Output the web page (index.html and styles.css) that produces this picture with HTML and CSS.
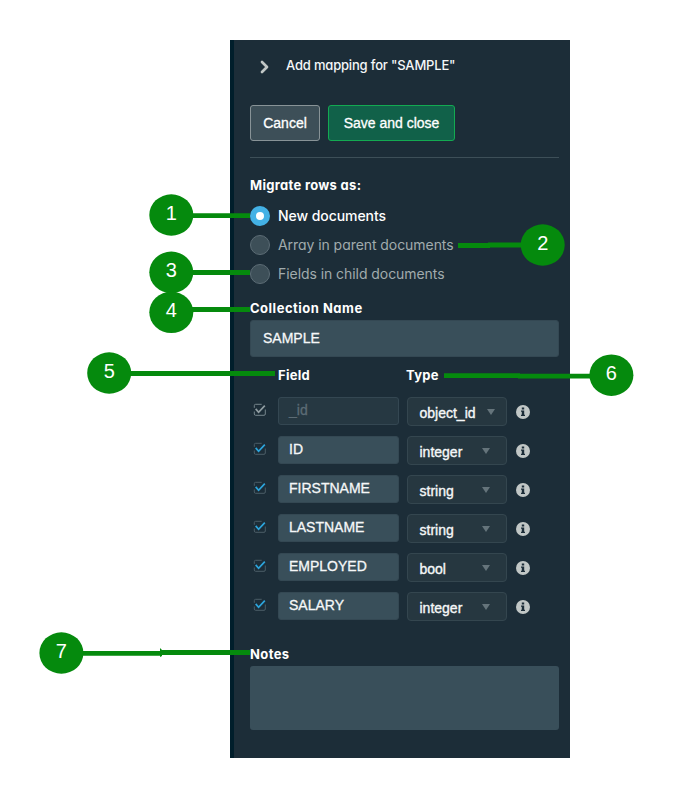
FILE: index.html
```
<!DOCTYPE html>
<html lang="en">
<head>
<meta charset="utf-8">
<title>Add mapping</title>
<link rel="stylesheet" href="styles.css">
</head>
<body>
<svg class="defs" width="0" height="0" aria-hidden="true">
  <symbol id="check" viewBox="0 0 14 14">
    <path class="box" d="M8.7 1.3H2.6Q1.3 1.3 1.3 2.6V4.8M1.3 8.5V11Q1.3 12.3 2.6 12.3H11Q12.3 12.3 12.3 11V6.5"/>
    <path class="tick" d="M2.7 5.9L5.6 9.3L11.8 2.7"/>
  </symbol>
  <symbol id="info" viewBox="0 0 14 14">
    <circle cx="7" cy="7" r="7" fill="#c1c7c6"/>
    <path d="M5.8 2.4h2.4v2H5.8zM5 5.4h3.2v4.3H9v1.4H5V9.7h.8V6.8H5z" fill="#1c2d38"/>
  </symbol>
</svg>
<main class="panel">
  <header class="head">
    <svg class="chevron" width="10" height="14" viewBox="0 0 10 14"><path d="M2 2L7 7L2 12"/></svg>
    <h1 class="title">Add mapping for "SAMPLE"</h1>
  </header>
  <div class="actions">
    <button class="btn">Cancel</button>
    <button class="btn save">Save and close</button>
  </div>
  <h2 class="label migrate">Migrate rows as:</h2>
  <div class="radios">
    <div class="radio on"><i></i><span>New documents</span></div>
    <div class="radio"><i></i><span>Array in parent documents</span></div>
    <div class="radio"><i></i><span>Fields in child documents</span></div>
  </div>
  <h2 class="label collection">Collection Name</h2>
  <div class="input wide">SAMPLE</div>
  <div class="columns"><h2 class="label">Field</h2><h2 class="label">Type</h2></div>
  <div class="rows">
    <div class="row off"><svg class="check"><use href="#check"/></svg><div class="input">_id</div><div class="select">object_id<b class="near"></b></div><svg class="info"><use href="#info"/></svg></div>
    <div class="row"><svg class="check"><use href="#check"/></svg><div class="input">ID</div><div class="select">integer<b></b></div><svg class="info"><use href="#info"/></svg></div>
    <div class="row"><svg class="check"><use href="#check"/></svg><div class="input">FIRSTNAME</div><div class="select">string<b></b></div><svg class="info"><use href="#info"/></svg></div>
    <div class="row"><svg class="check"><use href="#check"/></svg><div class="input">LASTNAME</div><div class="select">string<b></b></div><svg class="info"><use href="#info"/></svg></div>
    <div class="row"><svg class="check"><use href="#check"/></svg><div class="input">EMPLOYED</div><div class="select">bool<b></b></div><svg class="info"><use href="#info"/></svg></div>
    <div class="row"><svg class="check"><use href="#check"/></svg><div class="input">SALARY</div><div class="select">integer<b></b></div><svg class="info"><use href="#info"/></svg></div>
  </div>
  <h2 class="label notes">Notes</h2>
  <div class="area"></div>
</main>
<svg class="callouts" width="673" height="798" viewBox="0 0 673 798">
  <g class="lines">
    <path d="M190 215.6H250M190 272.5H250M190 309.5H250M458 245.5H490M488 245H525M128 373.5H275M444 375.6H520M518 376.2H595M80 653.4H162M160 652.5H250"/>
  </g>
  <path class="dot" d="M160 648l2 2v6l-2 1z"/>
  <g class="dot">
    <ellipse cx="171.3" cy="215" rx="22" ry="20.7"/>
    <ellipse cx="542.7" cy="245" rx="22" ry="20.7"/>
    <ellipse cx="171.3" cy="272.3" rx="22" ry="20.7"/>
    <ellipse cx="171.3" cy="312.3" rx="22" ry="20.7"/>
    <ellipse cx="109.2" cy="373" rx="22" ry="20.7"/>
    <ellipse cx="611.4" cy="375.2" rx="22" ry="20.7"/>
    <ellipse cx="61.4" cy="653" rx="22" ry="20.7"/>
  </g>
  <g class="num">
    <text x="171.3" y="220">1</text>
    <text x="542.7" y="250">2</text>
    <text x="171.3" y="277">3</text>
    <text x="171.3" y="317">4</text>
    <text x="109.2" y="378">5</text>
    <text x="611.4" y="380">6</text>
    <text x="61.4" y="658">7</text>
  </g>
</svg>
</body>
</html>
```
FILE: styles.css
```
* { box-sizing: border-box; }
body { margin: 0; width: 673px; height: 798px; background: #fff; overflow: hidden; padding: 40px 0 0 230px; }
.defs { position: absolute; }
.panel {
  width: 340px; height: 718px; background: #1c2d38;
  border-left: 4px solid #001e2b; padding: 0 11px 0 16px;
  font-family: "Liberation Sans", sans-serif; color: #f5f7f8;
}
.head { height: 65px; display: flex; align-items: flex-start; padding-top: 15px; }
.chevron { margin: 5px 0 0 10px; fill: none; stroke: #c1c7c6; stroke-width: 2.7; stroke-linecap: round; stroke-linejoin: round; }
.title, .label, .radio { font-family: Inter, "Liberation Sans", sans-serif; font-feature-settings: "cv11"; white-space: nowrap; }
.title { margin: 0 0 0 16px; font-size: 13px; line-height: 20px; font-weight: 500; letter-spacing: -0.18px; }
.actions { display: flex; gap: 8px; height: 53px; border-bottom: 1px solid #3d4f58; }
.btn { width: 70px; height: 36px; padding: 0; border: 1px solid #889397; border-radius: 3px; background: #3d4f58; color: #fff; font: 14px "Liberation Sans", sans-serif; -webkit-text-stroke: .3px; }
.save { width: 127px; border-color: #13aa52; background: #116149; }
.label { margin: 0; font-size: 13px; line-height: 18px; font-weight: 700; color: #fff; letter-spacing: .3px; }
.migrate { margin-top: 18px; }
.radios { margin-top: 12px; display: grid; gap: 9px; }
.radio { display: flex; align-items: center; gap: 8px; height: 20px; font-size: 14px; line-height: 20px; color: #a1abad; letter-spacing: -.06px; }
.radio i { width: 20px; height: 20px; border: 1px solid #5c6c75; border-radius: 50%; background: #3d4f58; flex: none; }
.radio.on { color: #fff; font-weight: 500; }
.radio.on i { background: #fff; border: 6px solid #43b1e5; }
.collection { margin-top: 15px; letter-spacing: .5px; }
.input { background: #394f5a; border: 1px solid #344853; border-radius: 3px; font-size: 14px; color: #f5f7f8; -webkit-text-stroke: .3px; }
.wide { height: 37px; line-height: 34px; padding-left: 12px; margin-top: 3px; }
.columns { display: grid; grid-template-columns: 128px 1fr; padding-left: 28px; margin-top: 9px; height: 31px; }
.rows { display: grid; gap: 11px; }
.row { display: grid; grid-template-columns: 17px 121px 101px 14px; column-gap: 8px; height: 28.1px; align-items: start; padding-left: 3px; }
.check { width: 14px; height: 14px; margin-top: 6px; fill: none; --tick: #2da5dc; --edge: #4b5d67; }
.off .check { --tick: #909da2; --edge: #76858c; }
.box { stroke: var(--edge); stroke-width: 1; }
.tick { stroke: var(--tick); stroke-width: 1.7; }
.row .input { height: 28px; line-height: 25px; padding-left: 10px; }
.off .input { background: #263842; border-color: #344752; color: #5c6c75; }
.select { width: 100px; height: 29px; border: 1px solid #34464f; border-radius: 4px; background: #263740; padding: 2px 12px 0 11.5px; font-size: 14px; line-height: 24px; display: flex; align-items: center; justify-content: space-between; -webkit-text-stroke: .35px; }
.select b { border: 4.5px solid transparent; border-top: 6px solid #65747b; border-bottom: 0; margin: -2px 4px 0 0; }
.select .near { margin-right: -1px; }
.info { width: 14px; height: 14px; margin: 7.5px 0 0; }
.notes { margin-top: 24px; letter-spacing: .4px; }
.area { height: 64px; margin-top: 3px; border-radius: 3px; background: #394f5a; }
.callouts { position: absolute; left: 0; top: 0; }
.lines { fill: none; stroke: #058a0d; stroke-width: 4.8; }
.dot { fill: #058a0d; }
.num { fill: #fff; font: 20px "Liberation Sans", sans-serif; text-anchor: middle; }
```
